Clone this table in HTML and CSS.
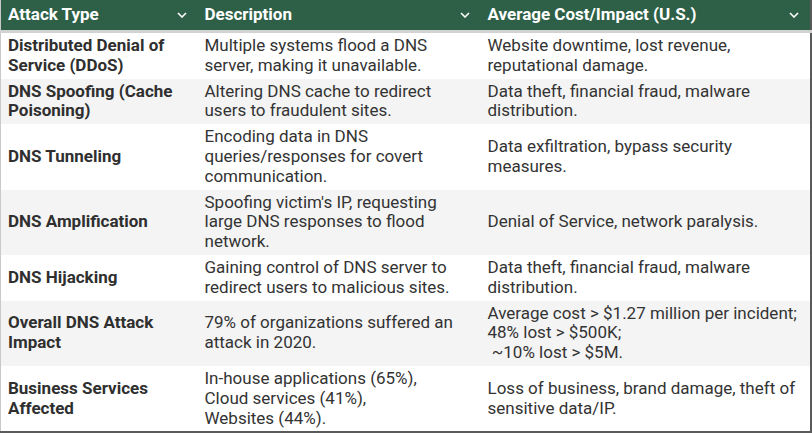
FILE: index.html
```html
<!DOCTYPE html>
<html>
<head>
<meta charset="utf-8">
<link rel="stylesheet" href="styles.css">
</head>
<body>
<table class="grid">
  <colgroup>
    <col class="c1"><col class="c2"><col class="c3">
  </colgroup>
  <thead>
    <tr>
      <th><div class="hcell"><span>Attack Type</span><svg class="chev" viewBox="0 0 10 6"><path d="M1 1 L5 5 L9 1"/></svg></div></th>
      <th><div class="hcell"><span>Description</span><svg class="chev" viewBox="0 0 10 6"><path d="M1 1 L5 5 L9 1"/></svg></div></th>
      <th><div class="hcell"><span>Average Cost/Impact (U.S.)</span><svg class="chev" viewBox="0 0 10 6"><path d="M1 1 L5 5 L9 1"/></svg></div></th>
    </tr>
  </thead>
  <tbody>
    <tr>
      <td class="name">Distributed Denial of Service (DDoS)</td>
      <td>Multiple systems flood a DNS server, making it unavailable.</td>
      <td>Website downtime, lost revenue, reputational damage.</td>
    </tr>
    <tr class="alt">
      <td class="name">DNS Spoofing (Cache Poisoning)</td>
      <td>Altering DNS cache to redirect users to fraudulent sites.</td>
      <td>Data theft, financial fraud, malware distribution.</td>
    </tr>
    <tr>
      <td class="name">DNS Tunneling</td>
      <td>Encoding data in DNS queries/responses for covert communication.</td>
      <td>Data exfiltration, bypass security measures.</td>
    </tr>
    <tr class="alt">
      <td class="name">DNS Amplification</td>
      <td>Spoofing victim's IP, requesting large DNS responses to flood network.</td>
      <td>Denial of Service, network paralysis.</td>
    </tr>
    <tr>
      <td class="name">DNS Hijacking</td>
      <td>Gaining control of DNS server to redirect users to malicious sites.</td>
      <td>Data theft, financial fraud, malware distribution.</td>
    </tr>
    <tr class="alt">
      <td class="name">Overall DNS Attack Impact</td>
      <td>79% of organizations suffered an attack in 2020.</td>
      <td>Average cost &gt; $1.27 million per incident;<br>48% lost &gt; $500K;<br>&nbsp;~10% lost &gt; $5M.</td>
    </tr>
    <tr>
      <td class="name">Business Services Affected</td>
      <td>In-house applications (65%),<br>Cloud services (41%),<br>Websites (44%).</td>
      <td>Loss of business, brand damage, theft of sensitive data/IP.</td>
    </tr>
  </tbody>
</table>
</body>
</html>
```

FILE: styles.css
```css
html, body {
  margin: 0;
  padding: 0;
  background: #ffffff;
}

.grid {
  width: 810px;
  border-collapse: collapse;
  table-layout: fixed;
  font-family: Roboto, "Liberation Sans", sans-serif;
  font-size: 17px;
  line-height: 19.8px;
  color: #333333;
  border-left: 1px solid #c9c9c9;
  border-right: 2px solid #5a5a5a;
  border-bottom: 2px solid #5a5a5a;
}

.c1 { width: 197px; }
.c2 { width: 283px; }
.c3 { width: 330px; }

.grid thead th {
  background: #2e6047;
  color: #ffffff;
  font-weight: 700;
  text-align: left;
  padding: 0 7px;
  height: 30px;
  border-bottom: 3px solid #d2d2d2;
}

.hcell {
  display: flex;
  align-items: center;
  justify-content: space-between;
}

.chev {
  width: 10px;
  height: 6px;
  fill: none;
  stroke: #ffffff;
  stroke-width: 1.6;
  margin-right: 4px;
}

.grid td {
  padding: 3px 7px;
  vertical-align: middle;
}

.grid td.name {
  font-weight: 700;
  color: #2f2f2f;
}

.grid tr.alt td {
  background: #f4f4f4;
}
```
